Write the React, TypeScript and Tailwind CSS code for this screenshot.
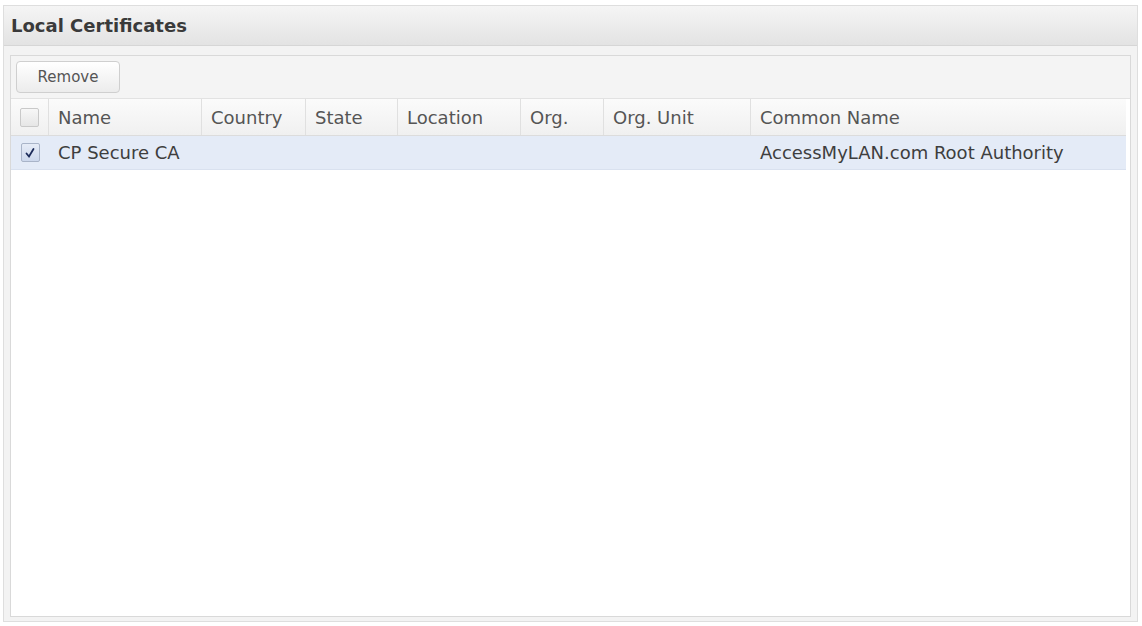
const columns = [
  { label: "Name", width: "w-[153px]" },
  { label: "Country", width: "w-[104px]" },
  { label: "State", width: "w-[92px]" },
  { label: "Location", width: "w-[123px]" },
  { label: "Org.", width: "w-[83px]" },
  { label: "Org. Unit", width: "w-[147px]" },
  { label: "Common Name", width: "flex-1" },
];

const rows = [
  {
    checked: true,
    cells: ["CP Secure CA", "", "", "", "", "", "AccessMyLAN.com Root Authority"],
  },
];

function Checkbox({ checked }: { checked?: boolean }) {
  return (
    <div
      className={`w-[19px] h-[19px] rounded-[2px] border flex items-center justify-center ${
        checked
          ? "border-[#a9b4c8] bg-gradient-to-b from-[#e6ecf7] to-[#cdd8ec]"
          : "border-[#c9c9c9] bg-gradient-to-b from-[#f7f7f7] to-[#e6e6e6]"
      }`}
    >
      {checked && (
        <svg width="12" height="12" viewBox="0 0 12 12">
          <path d="M2.5 6.5 L5 9.5 L9.5 2" stroke="#1d2c5a" strokeWidth="1.8" fill="none" strokeLinecap="round" />
        </svg>
      )}
    </div>
  );
}

export default function App() {
  return (
    <div
      className="w-full h-screen bg-white pt-[5px] pl-[3px] pr-[4px] pb-[4px] flex"
      style={{ fontFamily: '"DejaVu Sans", Verdana, sans-serif' }}
    >
      <div className="flex-1 flex flex-col border border-[#dedede] bg-[#f3f3f3]">
        <div className="h-[40px] shrink-0 flex items-center px-[7px] bg-gradient-to-b from-[#f5f5f5] to-[#e3e3e3] border-b border-[#d6d6d6]">
          <span className="text-[18px] font-bold text-[#3a3a3a]">Local Certificates</span>
        </div>

        <div className="flex-1 flex pt-[9px] pl-[6px] pr-[6px] pb-[4px]">
          <div className="flex-1 flex flex-col border border-[#d9d9d9] bg-white">
            <div className="h-[43px] shrink-0 flex items-center pl-[5px] bg-[#f4f4f4] border-b border-[#e2e2e2]">
              <button className="h-[32px] w-[104px] rounded-[4px] border border-[#cfcfcf] bg-gradient-to-b from-[#ffffff] to-[#ececec] text-[15px] text-[#555]">
                Remove
              </button>
            </div>

            <div className="flex pr-[4px]">
              <div className="flex-1 flex flex-col">
                <div className="h-[37px] flex items-center bg-gradient-to-b from-[#fbfbfb] to-[#f0f0f0] border-b border-[#dcdcdc]">
                  <div className="w-[38px] h-full flex items-center justify-center border-r border-[#e0e0e0]">
                    <Checkbox />
                  </div>
                  {columns.map((c, i) => (
                    <div
                      key={c.label}
                      className={`${c.width} h-full flex items-center px-[9px] text-[18px] text-[#555] ${
                        i < columns.length - 1 ? "border-r border-[#e0e0e0]" : ""
                      }`}
                    >
                      {c.label}
                    </div>
                  ))}
                </div>

                {rows.map((r, ri) => (
                  <div key={ri} className="h-[34px] flex items-center bg-[#e4ebf7] border-b border-[#d9e1ef]">
                    <div className="w-[38px] h-full flex items-center justify-center">
                      <Checkbox checked={r.checked} />
                    </div>
                    {columns.map((c, i) => (
                      <div
                        key={c.label}
                        className={`${c.width} h-full flex items-center px-[9px] text-[18px] text-[#3e3e3e] whitespace-nowrap`}
                      >
                        {r.cells[i]}
                      </div>
                    ))}
                  </div>
                ))}
              </div>
            </div>
          </div>
        </div>
      </div>
    </div>
  );
}
